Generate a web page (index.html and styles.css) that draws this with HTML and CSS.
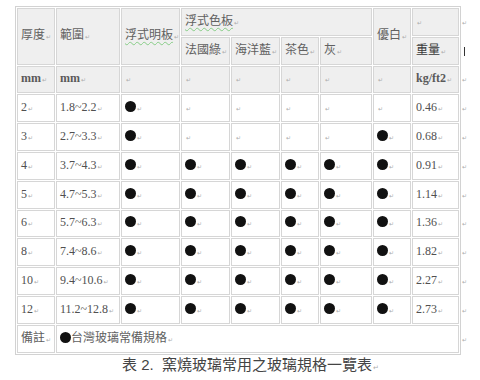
FILE: index.html
```html
<!DOCTYPE html>
<html lang="zh-Hant">
<head>
<meta charset="utf-8">
<title>窯燒玻璃常用之玻璃規格一覽表</title>
<link rel="stylesheet" href="styles.css">
</head>
<body>
<div class="doc">
  <div class="row">
    <table class="spec">
      <colgroup>
        <col class="c1"><col class="c2"><col class="c3"><col class="c4"><col class="c5"><col class="c6"><col class="c7"><col class="c8"><col class="c9">
      </colgroup>
      <tr class="hd">
        <td rowspan="2" class="zh">厚度<span class="pm">↵</span></td>
        <td rowspan="2" class="zh">範圍<span class="pm">↵</span></td>
        <td rowspan="2" class="zh"><span class="gram">浮式明板</span><span class="pm">↵</span></td>
        <td colspan="4" class="zh"><span class="gram">浮式色板</span><span class="pm">↵</span></td>
        <td rowspan="2" class="zh">優白<span class="pm">↵</span></td>
        <td><span class="pm">↵</span></td>
      </tr>
      <tr class="hd">
        <td class="zh">法國綠<span class="pm">↵</span></td>
        <td class="zh">海洋藍<span class="pm">↵</span></td>
        <td class="zh">茶色<span class="pm">↵</span></td>
        <td class="zh">灰<span class="pm">↵</span></td>
        <td class="zh strong">重量<span class="pm">↵</span></td>
      </tr>
      <tr class="hd">
        <td class="b">mm<span class="pm">↵</span></td>
        <td class="b">mm<span class="pm">↵</span></td>
        <td><span class="pm">↵</span></td>
        <td><span class="pm">↵</span></td>
        <td><span class="pm">↵</span></td>
        <td><span class="pm">↵</span></td>
        <td><span class="pm">↵</span></td>
        <td><span class="pm">↵</span></td>
        <td class="b">kg/ft2<span class="pm">↵</span></td>
      </tr>
      <tr>
        <td>2<span class="pm">↵</span></td><td>1.8~2.2<span class="pm">↵</span></td>
        <td><span class="dot"></span><span class="pm">↵</span></td>
        <td><span class="pm">↵</span></td><td><span class="pm">↵</span></td><td><span class="pm">↵</span></td><td><span class="pm">↵</span></td><td><span class="pm">↵</span></td>
        <td>0.46<span class="pm">↵</span></td>
      </tr>
      <tr>
        <td>3<span class="pm">↵</span></td><td>2.7~3.3<span class="pm">↵</span></td>
        <td><span class="dot"></span><span class="pm">↵</span></td>
        <td><span class="pm">↵</span></td><td><span class="pm">↵</span></td><td><span class="pm">↵</span></td><td><span class="pm">↵</span></td>
        <td><span class="dot"></span><span class="pm">↵</span></td>
        <td>0.68<span class="pm">↵</span></td>
      </tr>
      <tr>
        <td>4<span class="pm">↵</span></td><td>3.7~4.3<span class="pm">↵</span></td>
        <td><span class="dot"></span><span class="pm">↵</span></td><td><span class="dot"></span><span class="pm">↵</span></td><td><span class="dot"></span><span class="pm">↵</span></td><td><span class="dot"></span><span class="pm">↵</span></td><td><span class="dot"></span><span class="pm">↵</span></td><td><span class="dot"></span><span class="pm">↵</span></td>
        <td>0.91<span class="pm">↵</span></td>
      </tr>
      <tr>
        <td>5<span class="pm">↵</span></td><td>4.7~5.3<span class="pm">↵</span></td>
        <td><span class="dot"></span><span class="pm">↵</span></td><td><span class="dot"></span><span class="pm">↵</span></td><td><span class="dot"></span><span class="pm">↵</span></td><td><span class="dot"></span><span class="pm">↵</span></td><td><span class="dot"></span><span class="pm">↵</span></td><td><span class="dot"></span><span class="pm">↵</span></td>
        <td>1.14<span class="pm">↵</span></td>
      </tr>
      <tr>
        <td>6<span class="pm">↵</span></td><td>5.7~6.3<span class="pm">↵</span></td>
        <td><span class="dot"></span><span class="pm">↵</span></td><td><span class="dot"></span><span class="pm">↵</span></td><td><span class="dot"></span><span class="pm">↵</span></td><td><span class="dot"></span><span class="pm">↵</span></td><td><span class="dot"></span><span class="pm">↵</span></td><td><span class="dot"></span><span class="pm">↵</span></td>
        <td>1.36<span class="pm">↵</span></td>
      </tr>
      <tr>
        <td>8<span class="pm">↵</span></td><td>7.4~8.6<span class="pm">↵</span></td>
        <td><span class="dot"></span><span class="pm">↵</span></td><td><span class="dot"></span><span class="pm">↵</span></td><td><span class="dot"></span><span class="pm">↵</span></td><td><span class="dot"></span><span class="pm">↵</span></td><td><span class="dot"></span><span class="pm">↵</span></td><td><span class="dot"></span><span class="pm">↵</span></td>
        <td>1.82<span class="pm">↵</span></td>
      </tr>
      <tr>
        <td>10<span class="pm">↵</span></td><td>9.4~10.6<span class="pm">↵</span></td>
        <td><span class="dot"></span><span class="pm">↵</span></td><td><span class="dot"></span><span class="pm">↵</span></td><td><span class="dot"></span><span class="pm">↵</span></td><td><span class="dot"></span><span class="pm">↵</span></td><td><span class="dot"></span><span class="pm">↵</span></td><td><span class="dot"></span><span class="pm">↵</span></td>
        <td>2.27<span class="pm">↵</span></td>
      </tr>
      <tr>
        <td>12<span class="pm">↵</span></td><td>11.2~12.8<span class="pm">↵</span></td>
        <td><span class="dot"></span><span class="pm">↵</span></td><td><span class="dot"></span><span class="pm">↵</span></td><td><span class="dot"></span><span class="pm">↵</span></td><td><span class="dot"></span><span class="pm">↵</span></td><td><span class="dot"></span><span class="pm">↵</span></td><td><span class="dot"></span><span class="pm">↵</span></td>
        <td>2.73<span class="pm">↵</span></td>
      </tr>
      <tr>
        <td class="zh">備註<span class="pm">↵</span></td>
        <td colspan="8" class="zh"><span class="dot"></span>台灣玻璃常備規格<span class="pm">↵</span></td>
      </tr>
    </table>
    <div class="marks">
      <span class="mk">↵</span>
      <span class="mk"><span class="bar"></span></span>
      <span class="mk">↵</span>
      <span class="mk">↵</span>
      <span class="mk">↵</span>
      <span class="mk">↵</span>
      <span class="mk">↵</span>
      <span class="mk">↵</span>
      <span class="mk">↵</span>
      <span class="mk">↵</span>
      <span class="mk">↵</span>
      <span class="mk">↵</span>
    </div>
  </div>
  <p class="caption">表 2.&nbsp; 窯燒玻璃常用之玻璃規格一覽表<span class="pm">↵</span></p>
</div>
</body>
</html>
```
FILE: styles.css
```css
html, body {
  margin: 0;
  padding: 0;
  background: #ffffff;
}

.doc {
  padding: 6px 0 0 15px;
  width: 465px;
}

.row {
  display: flex;
  align-items: flex-start;
}

.spec {
  table-layout: fixed;
  width: 446px;
  border: 1px solid #d2d2d2;
  border-spacing: 1px;
  background: #ffffff;
  font-family: "Liberation Serif", "Noto Sans CJK TC", serif;
  font-size: 12px;
  color: #505050;
}

.c1 { width: 38px; }
.c2 { width: 64px; }
.c3 { width: 59px; }
.c4 { width: 49px; }
.c5 { width: 49px; }
.c6 { width: 38px; }
.c7 { width: 52px; }
.c8 { width: 38px; }
.c9 { width: 47px; }

.spec tr {
  height: 27.8px;
}

.spec td {
  border: 1px solid #d6d6d6;
  padding: 0 2px 0 3px;
  vertical-align: middle;
  line-height: 14px;
  white-space: nowrap;
  overflow: hidden;
}

.spec td.zh {
  color: #606060;
}

.spec td.strong {
  color: #383838;
}

.hd td {
  background: #efefef;
}

.spec td.b {
  font-weight: bold;
  color: #5a5a5a;
}

.gram {
  text-decoration: underline wavy #86cc86;
  text-decoration-thickness: 1px;
  text-underline-offset: 2px;
}

.pm {
  font-family: "DejaVu Sans", sans-serif;
  font-size: 6px;
  font-weight: normal;
  color: #acacac;
  margin-left: 1px;
}

.dot {
  display: inline-block;
  width: 11px;
  height: 11px;
  border-radius: 50%;
  background: #111111;
  vertical-align: -1px;
}

.marks {
  display: flex;
  flex-direction: column;
  padding-top: 2px;
  padding-left: 1px;
}

.mk {
  height: 28.8px;
  display: flex;
  align-items: center;
  font-family: "DejaVu Sans", sans-serif;
  font-size: 6px;
  color: #acacac;
}

.bar {
  display: block;
  width: 1px;
  height: 9px;
  margin-left: 2px;
  background: #333333;
}

.caption {
  margin: 0;
  padding: 1px 0 0 107px;
  font-family: "Liberation Sans", "Noto Sans CJK TC", sans-serif;
  font-size: 15px;
  line-height: 18px;
  color: #444444;
}

.caption .pm {
  font-size: 7px;
}
```
